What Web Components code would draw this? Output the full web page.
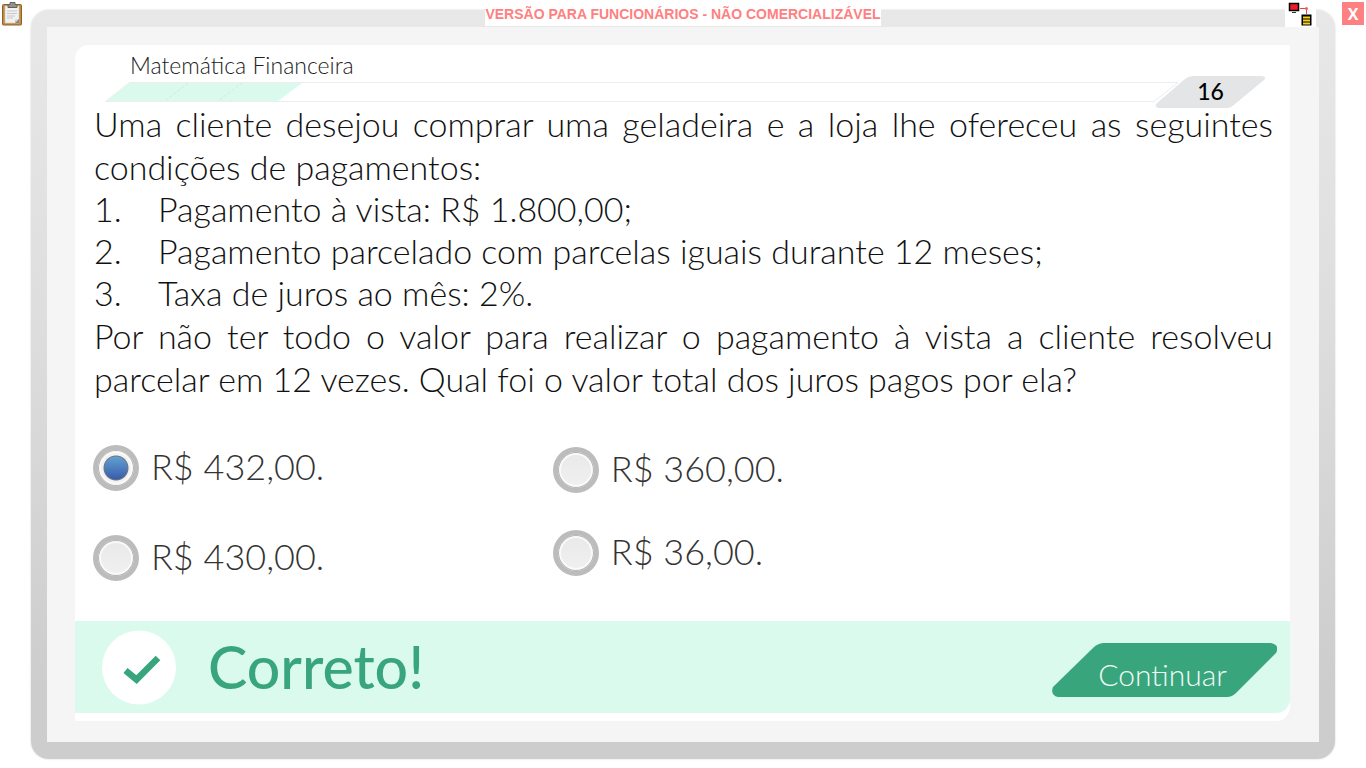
<!DOCTYPE html>
<html lang="pt-BR">
<head>
<meta charset="utf-8">
<meta name="viewport" content="width=device-width, initial-scale=1">
<title>Matemática Financeira</title>
<style>
html, body { margin: 0; background: #fff; }
body { font-family: Lato, "Open Sans", sans-serif; font-weight: 300; color: #111; }
</style>
</head>
<body>
<quiz-app></quiz-app>
<script>
const define = (name, html, setup) => {
  const template = document.createElement('template');
  template.innerHTML = html;
  customElements.define(name, class extends HTMLElement {
    constructor() {
      super();
      this.attachShadow({ mode: 'open' }).append(template.content.cloneNode(true));
    }
    connectedCallback() { if (setup) setup(this, this.shadowRoot); }
  });
};

define('top-tools', `
<style>
:host { position: absolute; inset: 0 0 auto 0; display: grid; grid-template-columns: 1fr auto 1fr; align-items: start; }
button { border: 0; padding: 0; margin: 0; background: none; display: block; }
.notes { margin: 2px; }
.label { background: #fff; color: #ff8080; font: bold 14px/16px "Liberation Sans", Arial, sans-serif; padding: 6px 0 4px; white-space: nowrap; }
.right { display: flex; justify-content: flex-end; gap: 26px; padding-right: 2px; }
.net { background: #fff; width: 31px; height: 27px; }
.close { margin-top: 2px; width: 22px; height: 23px; background: #ff8080; color: #fff; font: bold 16px/22px "Open Sans", sans-serif; }
svg { display: block; }
</style>
<button class="notes" aria-label="Anotações"><svg width="21" height="24" viewBox="0 0 21 24">
<rect x=".5" y="2.5" width="19" height="20.5" rx="1" fill="#c48a3c" stroke="#8f6225"/>
<path d="M3 4H17V21H3Z" fill="#f1f1f1" stroke="#cfcfcf" stroke-width=".6"/>
<path d="M6 2V5.500H15V2.500H13V.5H8V2.500H6Z" fill="#92928b" stroke="#62625c"/>
<path d="M5 9H15M5 11.500H15M5 14H13M5 16H11" stroke="#c9c9c9"/>
<path d="M13 21L14 17L17 17V21Z" fill="#858585"/><path d="M13 21L14 17L17 17Z" fill="#ddd"/></svg></button>
<div class="label">VERSÃO PARA FUNCIONÁRIOS - NÃO COMERCIALIZÁVEL</div>
<div class="right">
<button class="net" aria-label="Rede"><svg width="31" height="27" viewBox="0 0 31 27">
<rect x="4.500" y="3.500" width="9" height="7" fill="#ed1c24" stroke="#000" stroke-width="1.500"/>
<path d="M7 12H11V13H7Z" fill="#333"/><path d="M15 8.500H21.500V14" fill="none" stroke="#f04040"/><circle cx="21.500" cy="8.500" r="1.500" fill="#f06060"/>
<rect x="16.500" y="14.500" width="10" height="11" fill="#000"/><path d="M18 17.500H25M18 20.500H25M18 23.500H25" stroke="#f5d31c" stroke-width="2"/></svg></button>
<button class="close" aria-label="Fechar">X</button>
</div>`);

define('device-frame', `
<style>
:host { display: block; box-sizing: border-box; min-height: calc(100vh - 19px); margin: 0 31px; padding: 17px 16px; border-radius: 18px; background: linear-gradient(#e8e8e8, #dedede 40%, #cdcdcd 90%); box-shadow: 0 0 2px #ccc; display: flex; }
.inner { flex: 1; min-width: 0; display: flex; background: #f5f5f5; padding: 18px 29px 21px 28px; }
</style>
<div class="inner"><slot></slot></div>`);

define('lesson-progress', `
<style>
:host { display: block; padding: 9px 24px 0 30px; }
h1 { margin: 0 0 0 25px; font-size: 23px; line-height: 22px; font-weight: 300; color: #222; }
.row { display: flex; align-items: flex-start; height: 26px; }
.track { flex: 1; min-width: 0; height: 20px; margin: 6px -24px 0 0; }
.badge { position: relative; width: 111px; height: 32px; }
.badge svg { display: block; }
.badge span { position: absolute; inset: 0; text-align: center; font: 500 23px/30px Lato, sans-serif; color: #000; }
</style>
<h1><slot></slot></h1>
<div class="row">
<svg class="track" viewBox="0 0 1074 20" preserveAspectRatio="none" aria-hidden="true">
<path d="M24.500 .5H1073L1049 19.500H.5Z" fill="#fff" stroke="#ededed"/>
<path d="M24 1H197L173 19H1Z" fill="#d9faec"/>
<path d="M83 1L60 19M137 1L113 19" stroke="#d3e8df" stroke-dasharray="3 2"/></svg>
<div class="badge"><svg width="111" height="32" viewBox="0 0 111 32" aria-hidden="true"><path d="M38 0H107Q112 1 109 4L80 28Q76 32 72 32H3Q-1 30 2 27L30 3Q34 0 38 0Z" fill="#e4e5e7"/></svg><span></span></div>
</div>`, (host, root) => { root.querySelector('span').textContent = host.getAttribute('page'); });

define('question-text', `
<style>
:host { display: block; padding: 0 17px 0 19px; font-size: 34px; }
p { margin: 0; line-height: 43px; text-align: justify; }
ol { margin: 0; padding: 0; list-style: none; line-height: 42px; }
li { display: grid; grid-template-columns: 64px 1fr; }
</style>
<p>Uma cliente desejou comprar uma geladeira e a loja lhe ofereceu as seguintes condições de pagamentos:</p>
<ol>
<li><span>1.</span><span>Pagamento à vista: R$ 1.800,00;</span></li>
<li><span>2.</span><span>Pagamento parcelado com parcelas iguais durante 12 meses;</span></li>
<li><span>3.</span><span>Taxa de juros ao mês: 2%.</span></li>
</ol>
<p>Por não ter todo o valor para realizar o pagamento à vista a cliente resolveu parcelar em 12 vezes. Qual foi o valor total dos juros pagos por ela?</p>`);

define('answer-list', `
<style>
:host { display: grid; grid-template-columns: 39% 1fr; padding: 45px 18px 36px; font-size: 36px; line-height: 46px; color: #333; }
div { display: flex; flex-direction: column; gap: 44px; }
div + div { gap: 37px; padding-top: 2px; }
label { display: flex; gap: 12px; height: 46px; }
label span { margin-top: -2px; }
input { appearance: none; flex: none; box-sizing: border-box; width: 46px; height: 46px; margin: 0; border-radius: 50%; border: 5px solid #bcbcbc; background: linear-gradient(#e9e9e9, #f0f0f0); box-shadow: inset 0 0 0 1px #b4b4b4, inset 0 0 0 3px #fafafa; }
input:checked { background: radial-gradient(circle, transparent 11px, #777 12px, #f3f3f3 13px), linear-gradient(#5fa0d0 20%, #3a5dae 80%); }
</style>
<div>
<label><input type="radio" name="answer" checked><span>R$ 432,00.</span></label>
<label><input type="radio" name="answer"><span>R$ 430,00.</span></label>
</div>
<div>
<label><input type="radio" name="answer"><span>R$ 360,00.</span></label>
<label><input type="radio" name="answer"><span>R$ 36,00.</span></label>
</div>`);

define('result-bar', `
<style>
:host { display: flex; align-items: center; box-sizing: border-box; height: 92px; margin: auto 0 8px; padding: 0 13px 0 27px; background: #d9faec; border-radius: 0 0 14px 0; }
svg { display: block; }
strong { flex: 1; margin-left: 31px; font-size: 59px; line-height: 72px; font-weight: 500; color: #39a57d; }
button { position: relative; margin: 6px 0 0; border: 0; padding: 0; width: 225px; height: 54px; background: none; color: #effaf6; font: 300 30px/54px Lato, sans-serif; }
button svg { position: absolute; inset: 0; }
button span { position: relative; display: block; padding: 4px 4px 0 0; }
</style>
<svg width="75" height="75" viewBox="0 0 75 75" aria-hidden="true"><circle cx="37" cy="37.500" r="37" fill="#fff"/><path d="M23.500 40.500L34.500 49.500L56 28" fill="none" stroke="#39a57d" stroke-width="6.500"/></svg>
<strong><slot></slot></strong>
<button><svg width="225" height="54" viewBox="0 0 225 54" aria-hidden="true"><path d="M52 0H219Q228 2 224 10L184 50Q180 54 175 54H6Q-2 52 1 44L42 4Q47 0 52 0Z" fill="#39a57d"/></svg><span>Continuar</span></button>`);

define('quiz-app', `
<style>
:host { display: block; position: relative; padding: 10px 0 9px; }
main { flex: 1; min-width: 0; display: flex; flex-direction: column; background: #fff; border-radius: 14px 0 14px 0; }
</style>
<device-frame><main>
<lesson-progress page="16">Matemática Financeira</lesson-progress>
<question-text></question-text>
<answer-list></answer-list>
<result-bar>Correto!</result-bar>
</main></device-frame>
<top-tools></top-tools>`);
</script>
</body>
</html>
